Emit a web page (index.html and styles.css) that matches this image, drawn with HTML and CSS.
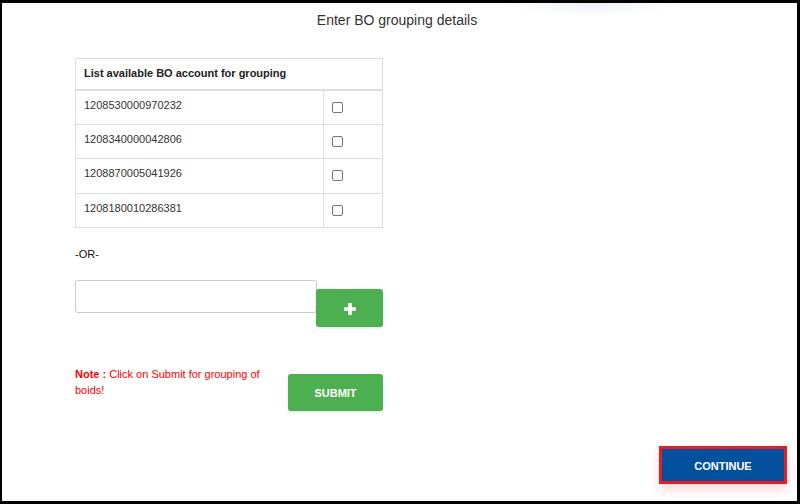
FILE: index.html
```html
<!DOCTYPE html>
<html lang="en">
<head>
<meta charset="utf-8">
<title>Enter BO grouping details</title>
<link rel="stylesheet" href="styles.css">
</head>
<body>
<div class="frame">
  <h1 class="title">Enter BO grouping details</h1>
  <div class="content">
    <table class="bo-table">
      <thead>
        <tr><th colspan="2">List available BO account for grouping</th></tr>
      </thead>
      <tbody>
        <tr><td class="acc">1208530000970232</td><td class="chk"><input type="checkbox"></td></tr>
        <tr><td class="acc">1208340000042806</td><td class="chk"><input type="checkbox"></td></tr>
        <tr class="row-tall"><td class="acc">1208870005041926</td><td class="chk"><input type="checkbox"></td></tr>
        <tr><td class="acc">1208180010286381</td><td class="chk"><input type="checkbox"></td></tr>
      </tbody>
    </table>
    <div class="or">-OR-</div>
    <div class="add-row">
      <input class="bo-input" type="text">
      <button class="btn-green btn-add" type="button" aria-label="Add">
        <svg width="14" height="14" viewBox="0 0 14 14"><path d="M7 1v12M1 7h12" stroke="#fff" stroke-width="3.6" fill="none"/></svg>
      </button>
    </div>
    <div class="submit-row">
      <p class="note"><b class="note-label">Note :</b> Click on Submit for grouping of boids!</p>
      <button class="btn-green btn-submit" type="button">SUBMIT</button>
    </div>
  </div>
  <div class="footer">
    <button class="btn-continue" type="button">CONTINUE</button>
  </div>
</div>
</body>
</html>
```
FILE: styles.css
```css
html, body {
  margin: 0;
  padding: 0;
  background: #000;
}
body {
  width: 800px;
  height: 504px;
  overflow: hidden;
  font-family: "Liberation Sans", Arial, sans-serif;
  color: #333;
}
.frame {
  position: relative;
  margin: 3px 3px 3px 2px;
  width: 795px;
  height: 498px;
  background: #fff;
  display: flex;
  flex-direction: column;
  overflow: hidden;
}
.frame::before {
  content: "";
  position: absolute;
  left: 500px;
  top: -14px;
  width: 180px;
  height: 26px;
  border-radius: 50%;
  background: radial-gradient(ellipse at center, rgba(200, 208, 225, 0.35) 0%, rgba(220, 226, 238, 0.15) 55%, rgba(255, 255, 255, 0) 75%);
}
.title {
  margin: 7px 0 0;
  font-size: 14px;
  line-height: 20px;
  font-weight: normal;
  text-align: center;
  color: #333;
  padding-right: 5px;
}
.content {
  margin: 28px 0 0 73px;
  width: 308px;
  display: flex;
  flex-direction: column;
}
.bo-table {
  width: 308px;
  border-collapse: collapse;
  border: 1px solid #ddd;
  font-size: 11px;
  line-height: 15px;
}
.bo-table th {
  text-align: left;
  font-weight: bold;
  color: #222;
  padding: 7px 8px 8px;
  border-bottom: 2px solid #ddd;
}
.bo-table td {
  padding: 7px 8px 11px;
  border-top: 1px solid #ddd;
  vertical-align: top;
}
.bo-table td.acc {
  width: 231px;
  border-right: 1px solid #ddd;
  color: #333;
}
.bo-table td.chk {
  padding: 11px 8px 7px 8px;
}
.bo-table .row-tall td.acc {
  padding-bottom: 12px;
}
.bo-table .row-tall td.chk {
  padding-bottom: 8px;
}
.bo-table input[type="checkbox"] {
  appearance: none;
  -webkit-appearance: none;
  display: block;
  width: 11px;
  height: 11px;
  margin: 0;
  border: 1px solid #767676;
  border-radius: 2px;
  background: #fff;
}
.or {
  margin-top: 19px;
  font-size: 11px;
  line-height: 15px;
  color: #111;
}
.add-row {
  margin-top: 18px;
  display: flex;
  align-items: flex-start;
}
.bo-input {
  box-sizing: border-box;
  width: 242px;
  height: 33px;
  margin: 0;
  border: 1px solid #ccc;
  border-radius: 3px;
  background: #fff;
}
.btn-green {
  border: none;
  margin: 0;
  padding: 0;
  background: #4caf50;
  color: #fff;
  border-radius: 3px;
  font-family: "Liberation Sans", Arial, sans-serif;
  box-shadow: 0 1px 3px rgba(0, 0, 0, 0.12);
}
.btn-add {
  margin-top: 9px;
  margin-left: -1px;
  width: 67px;
  height: 38px;
  display: flex;
  align-items: center;
  justify-content: center;
}
.btn-add svg {
  display: block;
  margin-top: 1px;
}
.submit-row {
  margin-top: 39px;
  display: flex;
  justify-content: space-between;
  align-items: flex-start;
}
.note {
  margin: 0;
  width: 196px;
  font-size: 11px;
  line-height: 16px;
  color: #ff0000;
}
.note-label {
  font-weight: bold;
}
.btn-submit {
  margin-top: 8px;
  width: 95px;
  height: 37px;
  font-size: 11px;
  font-weight: bold;
}
.footer {
  margin-top: auto;
  display: flex;
  justify-content: flex-end;
  padding: 0 10px 17px 0;
}
.btn-continue {
  box-sizing: border-box;
  width: 128px;
  height: 38px;
  margin: 0;
  border: 3px solid #e81c24;
  background: #03519c;
  color: #fff;
  font-family: "Liberation Sans", Arial, sans-serif;
  font-size: 11px;
  font-weight: bold;
  padding-top: 2px;
  box-shadow: 0 5px 12px rgba(232, 28, 36, 0.18);
}
```
